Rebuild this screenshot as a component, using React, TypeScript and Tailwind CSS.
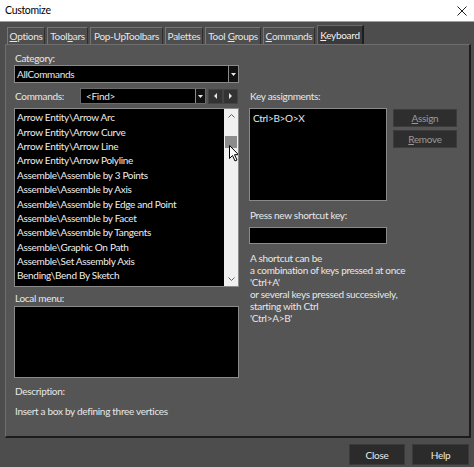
import React from "react";

const font = "font-['Lato','Liberation_Sans',sans-serif]";

function Tab({ children, active, w }: { children: React.ReactNode; active?: boolean; w: string }) {
  if (active) {
    return (
      <div className={`${w} h-[19px] -mt-[1px] flex items-center justify-center bg-[#3a3a3a] border-t border-l border-[#6a6a6a] border-r-2 border-r-[#1e1e1e] text-[#f2f2f2] relative z-10`}>
        {children}
      </div>
    );
  }
  return (
    <div className={`${w} h-[17px] flex items-center justify-center bg-[#4e4e4e] border-t border-l border-[#767676] border-r border-r-[#2e2e2e] text-[#e6e6e6]`}>
      {children}
    </div>
  );
}

function Tri({ dir }: { dir: "down" | "left" | "right" }) {
  const pts = dir === "down" ? "0,0 5,0 2.5,3" : dir === "left" ? "3,0 3,6 0,3" : "0,0 0,6 3,3";
  const w = dir === "down" ? 5 : 3;
  const h = dir === "down" ? 3 : 6;
  return (
    <svg width={w} height={h} viewBox={`0 0 ${w} ${h}`}>
      <polygon points={pts} fill="#e8e8e8" />
    </svg>
  );
}

const items = [
  "Arrow Entity\\Arrow Arc",
  "Arrow Entity\\Arrow Curve",
  "Arrow Entity\\Arrow Line",
  "Arrow Entity\\Arrow Polyline",
  "Assemble\\Assemble by 3 Points",
  "Assemble\\Assemble by Axis",
  "Assemble\\Assemble by Edge and Point",
  "Assemble\\Assemble by Facet",
  "Assemble\\Assemble by Tangents",
  "Assemble\\Graphic On Path",
  "Assemble\\Set Assembly Axis",
  "Bending\\Bend By Sketch",
  "Bending\\Bending Body",
];

export default function App() {
  return (
    <div className={`w-[474px] h-[467px] bg-[#4d4d4d] flex flex-col overflow-hidden ${font} text-[10px] tracking-[-0.3px] leading-none`}>
      {/* Title bar */}
      <div className="h-[22px] bg-white border-b border-[#a0a0a0] flex items-center justify-between pl-[5px] pr-[7px] shrink-0">
        <span className="text-[10.5px] text-black">Customize</span>
        <svg width="10" height="10" viewBox="0 0 10 10">
          <path d="M0.5 0.5 L9.5 9.5 M9.5 0.5 L0.5 9.5" stroke="#222" strokeWidth="1" />
        </svg>
      </div>

      {/* Tabs */}
      <div className="flex items-end pl-[7px] mt-[5px] gap-[2px] h-[17px] shrink-0">
        <Tab w="w-[38px]"><span><u>O</u>ptions</span></Tab>
        <Tab w="w-[41px]"><span>Tool<u>b</u>ars</span></Tab>
        <Tab w="w-[73px]"><span>Pop-UpToolbars</span></Tab>
        <Tab w="w-[38px]"><span>Palettes</span></Tab>
        <Tab w="w-[56px]"><span>Tool <u>G</u>roups</span></Tab>
        <Tab w="w-[52px]"><span><u>C</u>ommands</span></Tab>
        <Tab w="w-[47px]" active><span><u>K</u>eyboard</span></Tab>
      </div>

      {/* Panel */}
      <div className="ml-[5px] mr-[3px] h-[394px] bg-[#555555] border-l border-t border-[#6e6e6e] border-r-2 border-b-2 border-r-[#1c1c1c] border-b-[#1c1c1c] flex pl-[8px] pt-[6px] text-[#e8e8e8] shrink-0">
        {/* Left column */}
        <div className="w-[225px] flex flex-col">
          <div className="h-[13px] flex items-center pl-[1px]">Category:</div>
          <div className="mt-[1px] h-[18px] bg-black border border-[#8a8a8a] flex items-center justify-between pl-[2px]">
            <span>AllCommands</span>
            <div className="w-[10px] h-full bg-[#111] border-l border-[#8a8a8a] flex items-center justify-center">
              <Tri dir="down" />
            </div>
          </div>
          <div className="mt-[5px] h-[16px] flex items-center">
            <span className="w-[66px] pl-[1px]">Commands:</span>
            <div className="w-[126px] h-full bg-black border border-[#6a6a6a] flex items-center justify-between pl-[5px]">
              <span>&lt;Find&gt;</span>
              <div className="w-[10px] h-full bg-[#111] border-l border-[#8a8a8a] flex items-center justify-center">
                <Tri dir="down" />
              </div>
            </div>
            <div className="ml-[2px] flex h-[15px]">
              <div className="w-[15px] h-full bg-[#333] border border-[#444] flex items-center justify-center">
                <Tri dir="left" />
              </div>
              <div className="w-[15px] h-full bg-[#333] border border-[#444] flex items-center justify-center">
                <Tri dir="right" />
              </div>
            </div>
          </div>
          {/* list */}
          <div className="mt-[4px] h-[179px] bg-black border border-[#8a8a8a] flex relative overflow-hidden">
            <div className="flex-1 pl-[2px] pt-[1px] overflow-hidden">
              {items.map((t) => (
                <div key={t} className="h-[14.4px] flex items-center whitespace-nowrap text-[#eeeeee]">
                  {t}
                </div>
              ))}
            </div>
            <div className="w-[14px] bg-[#f0f0f0] flex flex-col items-center relative">
              <svg className="mt-[5px]" width="7" height="4" viewBox="0 0 7 4">
                <path d="M0.5 3.5 L3.5 0.5 L6.5 3.5" stroke="#606060" fill="none" strokeWidth="1" />
              </svg>
              <div className="mt-[18px] w-[12px] h-[12px] bg-[#8c8c8c]" />
              <svg className="mt-auto mb-[5px]" width="7" height="4" viewBox="0 0 7 4">
                <path d="M0.5 0.5 L3.5 3.5 L6.5 0.5" stroke="#606060" fill="none" strokeWidth="1" />
              </svg>
            </div>
            <svg className="absolute left-[214px] top-[36px]" width="11" height="17" viewBox="0 0 11 17">
              <path d="M0.5 0.5 L0.5 13.5 L3.5 10.5 L6 16 L8 15 L5.5 9.7 L9.5 9.7 Z" fill="#fff" stroke="#000" strokeWidth="1" />
            </svg>
          </div>
          <div className="mt-[4px] h-[13px] flex items-center pl-[1px]">Local menu:</div>
          <div className="mt-[2px] h-[72px] bg-black border border-[#8a8a8a]" />
          <div className="mt-[6px] h-[13px] flex items-center pl-[1px]">Description:</div>
          <div className="mt-[7px] h-[13px] flex items-center pl-[1px]">Insert a box by defining three vertices</div>
        </div>

        {/* Right column */}
        <div className="ml-[10px] flex flex-col">
          <div className="mt-[38px] h-[13px] flex items-center pl-[1px]">Key assignments:</div>
          <div className="mt-[6px] flex">
            <div className="w-[138px] h-[93px] bg-black border border-[#8a8a8a] pl-[3px] pt-[3px]">
              <div className="h-[12px] flex items-center">Ctrl&gt;B&gt;O&gt;X</div>
            </div>
            <div className="ml-[6px] flex flex-col gap-[3px] pt-[1px]">
              <div className="w-[64px] h-[18px] bg-[#2e2e2e] border border-[#3c3c3c] flex items-center justify-center text-[#9a9a9a]">
                <span><u>A</u>ssign</span>
              </div>
              <div className="w-[64px] h-[18px] bg-[#2e2e2e] border border-[#3c3c3c] flex items-center justify-center text-[#9a9a9a]">
                <span><u>R</u>emove</span>
              </div>
            </div>
          </div>
          <div className="mt-[7px] h-[13px] flex items-center pl-[1px]">Press new shortcut key:</div>
          <div className="mt-[6px] w-[138px] h-[17px] bg-black border border-[#8a8a8a]" />
          <div className="mt-[8px] flex flex-col pl-[1px]">
            <div className="h-[12px] flex items-center">A shortcut can be</div>
            <div className="h-[12px] flex items-center">a combination of keys pressed at once</div>
            <div className="h-[12px] flex items-center">'Ctrl+A'</div>
            <div className="h-[12px] flex items-center">or several keys pressed successively,</div>
            <div className="h-[12px] flex items-center">starting with Ctrl</div>
            <div className="h-[12px] flex items-center">'Ctrl&gt;A&gt;B'</div>
          </div>
        </div>
      </div>

      {/* Bottom buttons */}
      <div className="flex justify-end gap-[7px] pr-[5px] mt-[6px]">
        <div className="w-[56px] h-[21px] bg-[#2b2b2b] border border-[#3a3a3a] flex items-center justify-center text-[#e8e8e8]">Close</div>
        <div className="w-[57px] h-[21px] bg-[#2b2b2b] border border-[#3a3a3a] flex items-center justify-center text-[#e8e8e8]">Help</div>
      </div>
    </div>
  );
}
